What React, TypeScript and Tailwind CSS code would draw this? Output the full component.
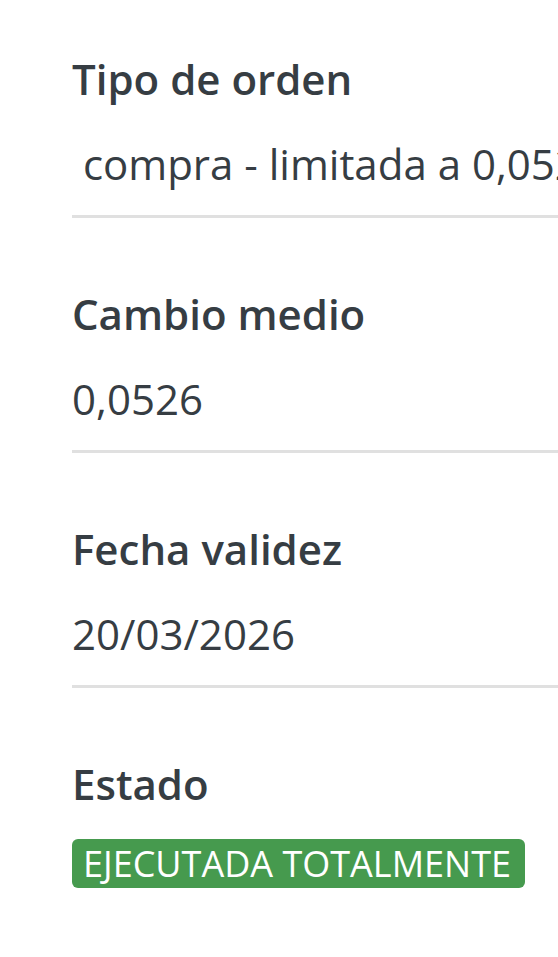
const rows = [
  { label: 'Tipo de orden', value: ' compra - limitada a 0,0526 EUR' },
  { label: 'Cambio medio', value: '0,0526' },
  { label: 'Fecha validez', value: '20/03/2026' },
]

export default function App() {
  return (
    <div
      className="min-h-[957px] w-[558px] overflow-hidden bg-white pl-[72px] pt-[51px] text-[#363d43]"
      style={{ fontFamily: '"Open Sans", "Noto Sans", sans-serif' }}
    >
      {rows.map((r) => (
        <div key={r.label} className="mb-[68px]">
          <p className="text-[42px] font-semibold leading-[56px]">{r.label}</p>
          <p className="mt-[29px] whitespace-pre text-[42px] leading-[56px]">{r.value}</p>
          <div className="mt-[23px] h-[3px] w-[600px] bg-[#e0e0e0]" />
        </div>
      ))}
      <div>
        <p className="text-[42px] font-semibold leading-[56px]">Estado</p>
        <span className="mt-[27px] inline-block rounded-[6px] bg-[#469a4e] pl-[11px] pr-[14px] text-[36px] leading-[49px] text-white">
          EJECUTADA TOTALMENTE
        </span>
      </div>
    </div>
  )
}
